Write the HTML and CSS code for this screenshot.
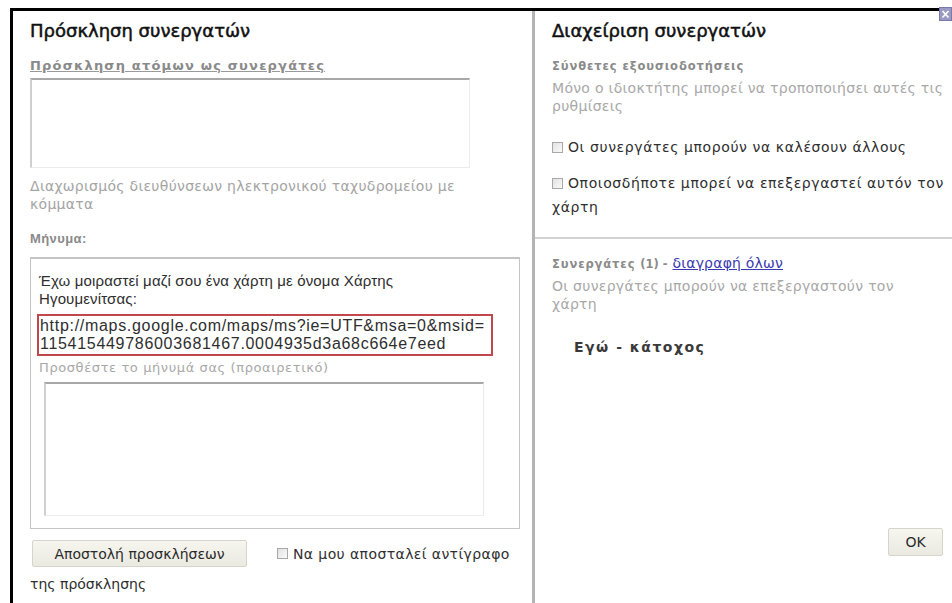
FILE: index.html
```html
<!DOCTYPE html>
<html lang="el">
<head>
<meta charset="utf-8">
<title>Συνεργάτες χάρτη</title>
<link rel="stylesheet" href="styles.css">
</head>
<body>
<div class="page">
  <div class="dialog">
    <section class="invite">
      <h2 class="title">Πρόσκληση συνεργατών</h2>
      <div class="field-label">Πρόσκληση ατόμων ως συνεργάτες</div>
      <div class="emails"></div>
      <p class="hint">Διαχωρισμός διευθύνσεων ηλεκτρονικού ταχυδρομείου με κόμματα</p>
      <div class="msg-label">Μήνυμα:</div>
      <div class="message">
        <p class="msg-text">Έχω μοιραστεί μαζί σου ένα χάρτη με όνομα Χάρτης Ηγουμενίτσας:</p>
        <div class="url">http://maps.google.com/maps/ms?ie=UTF&amp;msa=0&amp;msid=<br>115415449786003681467.0004935d3a68c664e7eed</div>
        <div class="optional">Προσθέστε το μήνυμά σας (προαιρετικό)</div>
        <div class="note"></div>
      </div>
      <div class="send-row">
        <button class="btn send">Αποστολή προσκλήσεων</button>
        <span class="check"><span class="box"></span>Να μου αποσταλεί αντίγραφο</span>
      </div>
      <div class="send-tail">της πρόσκλησης</div>
    </section>
    <section class="manage">
      <h2 class="title">Διαχείριση συνεργατών</h2>
      <div class="settings">
        <div class="small-label">Σύνθετες εξουσιοδοτήσεις</div>
        <p class="sub">Μόνο ο ιδιοκτήτης μπορεί να τροποποιήσει αυτές τις ρυθμίσεις</p>
        <div class="option first"><span class="box"></span>Οι συνεργάτες μπορούν να καλέσουν άλλους</div>
        <div class="option second"><span class="box"></span>Οποιοσδήποτε μπορεί να επεξεργαστεί αυτόν τον χάρτη</div>
      </div>
      <div class="people">
        <div class="small-label">Συνεργάτες <span class="count">(1) -</span> <a class="clear" href="#">διαγραφή όλων</a></div>
        <p class="sub narrow">Οι συνεργάτες μπορούν να επεξεργαστούν τον χάρτη</p>
        <div class="owner">Εγώ - κάτοχος</div>
        <div class="ok-row"><button class="btn ok">OK</button></div>
      </div>
    </section>
    <span class="close" aria-label="Κλείσιμο">
      <svg width="13" height="14" viewBox="0 0 13 14">
        <rect x="0.5" y="0.5" width="12" height="13" fill="#9a9ac4" stroke="#7a7aa8"/>
        <path d="M3.5 4 L9.5 10.5 M9.5 4 L3.5 10.5" stroke="#ffffff" stroke-width="1.6"/>
      </svg>
    </span>
  </div>
</div>
</body>
</html>
```

FILE: styles.css
```css
html, body {
  margin: 0;
  padding: 0;
  background: #ffffff;
}

body {
  width: 952px;
  height: 603px;
  overflow: hidden;
  font-family: "DejaVu Sans", Verdana, sans-serif;
  color: #2e2e2e;
}

.page {
  padding: 8px 0 0 10px;
  height: 603px;
  box-sizing: border-box;
}

.dialog {
  position: relative;
  display: flex;
  height: 100%;
  border-top: 3px solid #000000;
  border-left: 3px solid #000000;
  box-sizing: border-box;
}

.title {
  margin: 0;
  font-family: "DejaVu Sans", Verdana, sans-serif;
  font-weight: normal;
  font-size: 18px;
  line-height: 22px;
  color: #111111;
  -webkit-text-stroke: 0.5px #111111;
}

.field-label {
  font-weight: bold;
  font-size: 13px;
  letter-spacing: 1.2px;
  color: #8a8a8a;
  line-height: 18px;
  text-decoration: underline;
  text-decoration-color: #9a9a9a;
}

.small-label {
  font-weight: bold;
  font-size: 11.5px;
  letter-spacing: 0.9px;
  color: #8a8a8a;
  line-height: 18px;
}

.box {
  display: inline-block;
  width: 11px;
  height: 11px;
  box-sizing: border-box;
  border: 1px solid #a8a8a8;
  background: linear-gradient(135deg, #e2e2e2, #fafafa);
  margin-right: 5px;
  flex: none;
}

.btn {
  font-family: "DejaVu Sans", Verdana, sans-serif;
  font-size: 14px;
  color: #2a2a2a;
  background: linear-gradient(#f6f5ee, #ebeae1);
  border: 1px solid #d6d5cc;
  border-radius: 2px;
  padding: 0;
}

/* ---------- invite column ---------- */
.invite {
  width: 502px;
  flex: none;
  padding: 9px 0 0 17px;
  border-right: 3px solid #b4b4b4;
}

.invite .title {
  margin-bottom: 15px;
}

.emails {
  width: 440px;
  height: 90px;
  box-sizing: border-box;
  margin-top: 3px;
  border-top: 2px solid #a8a8a8;
  border-left: 2px solid #cfcfcf;
  border-right: 1px solid #ececec;
  border-bottom: 1px solid #ececec;
}

.hint {
  margin: 9px 0 0;
  width: 462px;
  font-size: 14px;
  line-height: 18px;
  letter-spacing: 0.3px;
  color: #a4a4a4;
}

.msg-label {
  margin-top: 17px;
  font-family: "Liberation Sans", Arial, sans-serif;
  font-size: 13px;
  font-weight: bold;
  letter-spacing: 0.4px;
  color: #8a8a8a;
  line-height: 18px;
}

.message {
  margin-top: 9px;
  width: 490px;
  height: 272px;
  box-sizing: border-box;
  border: 1px solid #c4c4c4;
  border-top: 2px solid #c4c4c4;
  padding: 13px 0 0 6px;
}

.msg-text {
  margin: 0 0 0 2px;
  width: 380px;
  font-family: "Liberation Sans", Arial, sans-serif;
  font-size: 15px;
  line-height: 18px;
  letter-spacing: 0.15px;
  color: #2e2e2e;
}

.url {
  margin-top: 6px;
  width: 456px;
  box-sizing: border-box;
  border: 2px solid #c0474c;
  padding: 1px 0 1px 1px;
  font-family: "Liberation Sans", Arial, sans-serif;
  font-size: 16px;
  line-height: 18px;
  letter-spacing: 0.7px;
  white-space: nowrap;
  overflow: hidden;
  color: #2e2e2e;
}

.optional {
  margin: 4px 0 0 2px;
  font-size: 13px;
  line-height: 16px;
  letter-spacing: 0.6px;
  color: #a8a8a8;
}

.note {
  margin: 6px 0 0 7px;
  width: 440px;
  height: 134px;
  box-sizing: border-box;
  border-top: 2px solid #a8a8a8;
  border-left: 2px solid #d0d0d0;
  border-right: 1px solid #ececec;
  border-bottom: 1px solid #ececec;
}

.send-row {
  display: flex;
  align-items: center;
  margin-top: 11px;
  margin-left: 2px;
}

.send {
  width: 215px;
  height: 27px;
}

.check {
  display: flex;
  align-items: center;
  margin-left: 30px;
  font-size: 14px;
  letter-spacing: 0.4px;
  color: #2e2e2e;
}

.send-tail {
  margin-top: 8px;
  font-size: 14px;
  line-height: 18px;
  color: #2e2e2e;
}

/* ---------- manage column ---------- */
.manage {
  flex: 1;
  display: flex;
  flex-direction: column;
}

.manage .title {
  padding: 9px 0 0 17px;
}

.settings {
  padding: 15px 0 18px 17px;
  border-bottom: 2px solid #d2d2d2;
}

.sub {
  margin: 4px 0 0;
  width: 396px;
  font-size: 14px;
  line-height: 18px;
  letter-spacing: 0.3px;
  color: #a8a8a8;
}

.sub.narrow {
  width: 370px;
}

.option {
  font-size: 14px;
  line-height: 24px;
  letter-spacing: 0.6px;
  color: #2e2e2e;
}

.option .box {
  vertical-align: -1px;
}

.option.first {
  margin-top: 20px;
}

.option.second {
  margin-top: 12px;
}

.people {
  flex: 1;
  display: flex;
  flex-direction: column;
  padding: 15px 6px 0 17px;
}

.count {
  letter-spacing: 0;
}

.clear {
  font-weight: normal;
  font-size: 14px;
  letter-spacing: 0.2px;
  color: #3a3ab0;
}

.owner {
  margin: 25px 0 0 22px;
  font-size: 14px;
  line-height: 18px;
  font-weight: bold;
  letter-spacing: 1.5px;
  color: #3a3a3a;
}

.ok-row {
  display: flex;
  justify-content: flex-end;
  margin-top: 172px;
  padding-right: 3px;
}

.ok {
  width: 55px;
  height: 28px;
}

.close {
  position: absolute;
  top: -4px;
  right: 0;
  line-height: 0;
}
```
